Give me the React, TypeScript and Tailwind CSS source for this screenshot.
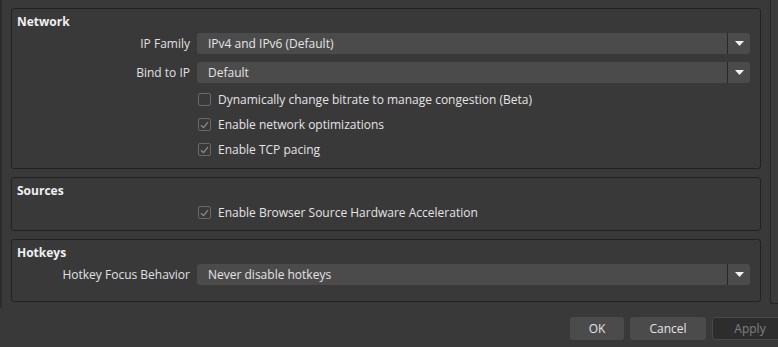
import { ReactNode } from "react";

const FONT = { fontFamily: "'Open Sans','DejaVu Sans',sans-serif" };

function Combo({ value }: { value: string }) {
  return (
    <div className="flex h-[21px] w-[553px] items-stretch rounded-[3px] bg-[#4c4b4c]">
      <div className="flex flex-1 items-center pl-[11px] text-[12px] text-[#e4e4e4]">{value}</div>
      <div className="w-px bg-[#2a292a]" />
      <div className="flex w-[22px] items-center justify-center">
        <svg width="9" height="5" viewBox="0 0 9 5">
          <polygon points="0,0 9,0 4.5,5" fill="#f2f2f2" />
        </svg>
      </div>
    </div>
  );
}

function Check({ checked, label }: { checked: boolean; label: string }) {
  return (
    <div className="flex h-[25px] items-center pl-[186px]">
      <div className="flex h-[13px] w-[13px] items-center justify-center rounded-[2px] border border-[#6a696a]">
        {checked && (
          <svg width="9" height="8" viewBox="0 0 9 8">
            <path d="M1 4.2 L3.5 6.6 L8 1.2" fill="none" stroke="#8e8d8e" strokeWidth="1.2" />
          </svg>
        )}
      </div>
      <span className="ml-[7px] text-[12px] text-[#e4e4e4]">{label}</span>
    </div>
  );
}

function Row({ label, children }: { label: string; children: ReactNode }) {
  return (
    <div className="flex items-center">
      <div className="w-[179px] pr-px text-right text-[12px] text-[#e0e0e0]">{label}</div>
      <div className="ml-[6px]">{children}</div>
    </div>
  );
}

function Group({ title, className, children }: { title: string; className: string; children: ReactNode }) {
  return (
    <div className={`rounded-[3px] border border-[#232223] pt-[4px] ${className}`}>
      <div className="h-[18px] pl-[5px] text-[12px] font-bold leading-[18px] text-[#f0f0f0]">{title}</div>
      {children}
    </div>
  );
}

export default function App() {
  return (
    <div className="relative h-[347px] w-[778px] overflow-hidden bg-[#3a393a]" style={FONT}>
      <div className="flex h-[304px] items-start">
        <div className="h-[308px] w-[2px] shrink-0 bg-[#2d2c2d]" />
        <div className="flex w-[768px] shrink-0 flex-col gap-[8px] pt-[8px] pl-[9px] pr-[9px]">
          <Group title="Network" className="pb-[6px]">
            <div className="mt-[2px] flex flex-col gap-[8px]">
              <Row label="IP Family">
                <Combo value="IPv4 and IPv6 (Default)" />
              </Row>
              <Row label="Bind to IP">
                <Combo value="Default" />
              </Row>
            </div>
            <div className="mt-[4px]">
              <Check checked={false} label="Dynamically change bitrate to manage congestion (Beta)" />
              <Check checked label="Enable network optimizations" />
              <Check checked label="Enable TCP pacing" />
            </div>
          </Group>
          <Group title="Sources" className="pb-[5px]">
            <Check checked label="Enable Browser Source Hardware Acceleration" />
          </Group>
          <Group title="Hotkeys" className="pb-[16px]">
            <div className="mt-[2px]">
              <Row label="Hotkey Focus Behavior">
                <Combo value="Never disable hotkeys" />
              </Row>
            </div>
          </Group>
        </div>
        <div className="h-[304px] flex-1 rounded-bl-[3px] border-b border-l border-[#262526] bg-[#3c3b3c]" />
      </div>
      <div className="mr-[-10px] mt-[13px] flex justify-end gap-[6px]">
        <button className="h-[23px] w-[54px] rounded-[3px] bg-[#4c4b4c] text-[12px] text-[#e4e4e4]">OK</button>
        <button className="h-[23px] w-[76px] rounded-[3px] bg-[#4c4b4c] text-[12px] text-[#e4e4e4]">Cancel</button>
        <button className="h-[23px] w-[76px] rounded-[3px] border border-[#4a494a] bg-[#2e2d2e] text-[12px] text-[#808080]">Apply</button>
      </div>
    </div>
  );
}
